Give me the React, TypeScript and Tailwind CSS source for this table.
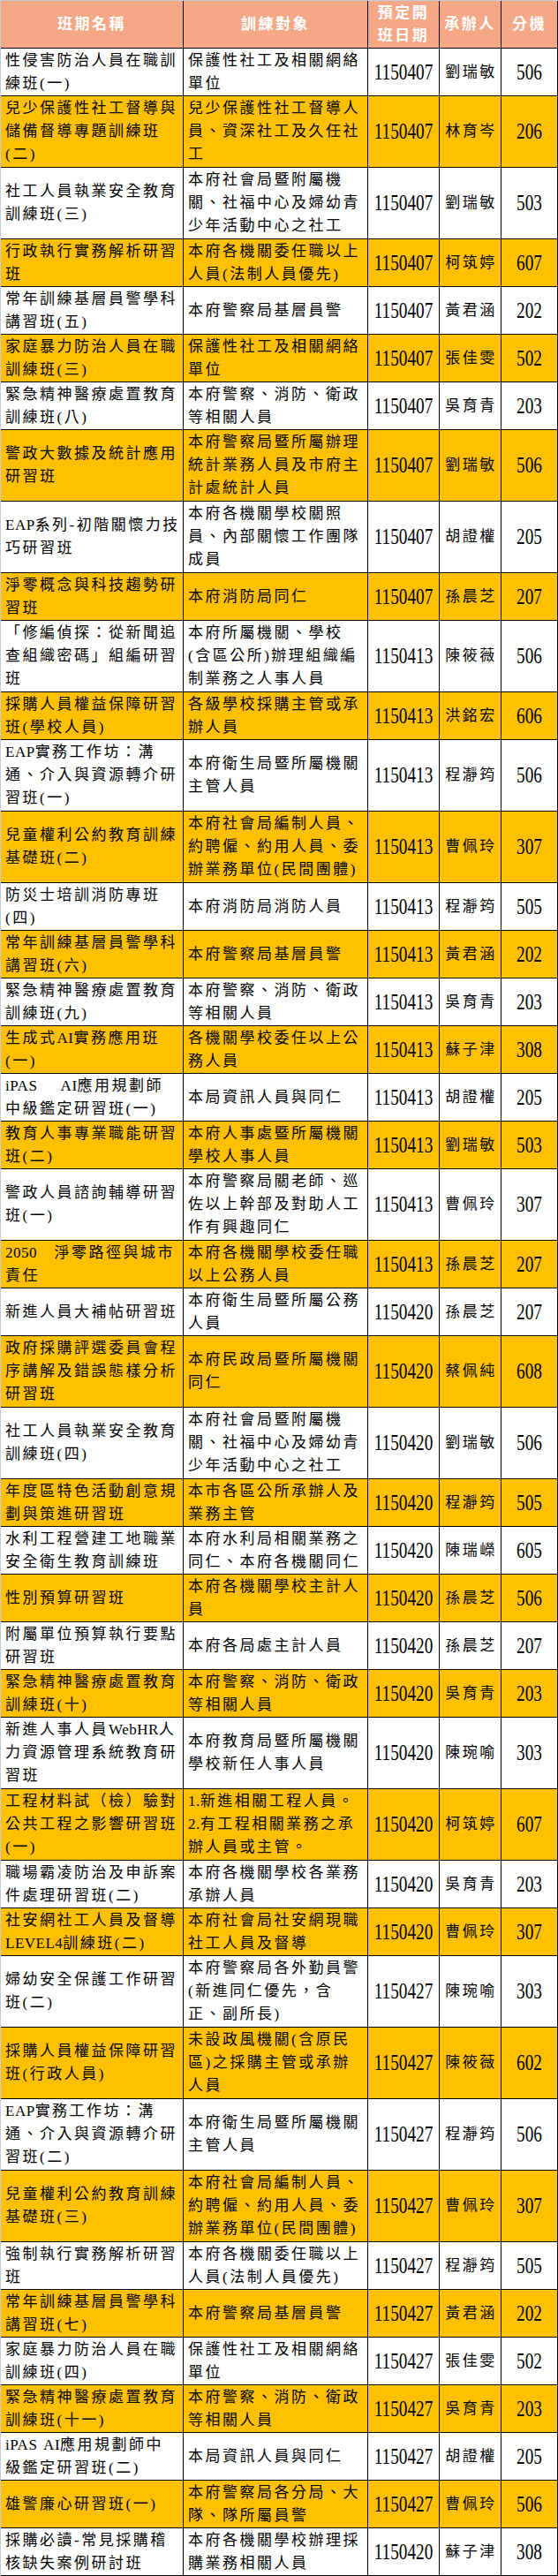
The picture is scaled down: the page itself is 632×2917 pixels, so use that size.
const rows: [string, string, string, string, string][] = [
  ["性侵害防治人員在職訓|練班(一)", "保護性社工及相關網絡|單位", "1150407", "劉瑞敏", "506"],
  ["兒少保護性社工督導與|儲備督導專題訓練班|(二)", "兒少保護性社工督導人|員、資深社工及久任社|工", "1150407", "林育岑", "206"],
  ["社工人員執業安全教育|訓練班(三)", "本府社會局暨附屬機|關、社福中心及婦幼青|少年活動中心之社工", "1150407", "劉瑞敏", "503"],
  ["行政執行實務解析研習|班", "本府各機關委任職以上|人員(法制人員優先)", "1150407", "柯筑婷", "607"],
  ["常年訓練基層員警學科|講習班(五)", "本府警察局基層員警", "1150407", "黃君涵", "202"],
  ["家庭暴力防治人員在職|訓練班(三)", "保護性社工及相關網絡|單位", "1150407", "張佳雯", "502"],
  ["緊急精神醫療處置教育|訓練班(八)", "本府警察、消防、衛政|等相關人員", "1150407", "吳育青", "203"],
  ["警政大數據及統計應用|研習班", "本府警察局暨所屬辦理|統計業務人員及市府主|計處統計人員", "1150407", "劉瑞敏", "506"],
  ["EAP系列-初階關懷力技|巧研習班", "本府各機關學校關照|員、內部關懷工作團隊|成員", "1150407", "胡證權", "205"],
  ["淨零概念與科技趨勢研|習班", "本府消防局同仁", "1150407", "孫晨芝", "207"],
  ["「修編偵探：從新聞追|查組織密碼」組編研習|班", "本府所屬機關、學校|(含區公所)辦理組織編|制業務之人事人員", "1150413", "陳筱薇", "506"],
  ["採購人員權益保障研習|班(學校人員)", "各級學校採購主管或承|辦人員", "1150413", "洪銘宏", "606"],
  ["EAP實務工作坊：溝|通、介入與資源轉介研|習班(一)", "本府衛生局暨所屬機關|主管人員", "1150413", "程瀞筠", "506"],
  ["兒童權利公約教育訓練|基礎班(二)", "本府社會局編制人員、|約聘僱、約用人員、委|辦業務單位(民間團體)", "1150413", "曹佩玲", "307"],
  ["防災士培訓消防專班|(四)", "本府消防局消防人員", "1150413", "程瀞筠", "505"],
  ["常年訓練基層員警學科|講習班(六)", "本府警察局基層員警", "1150413", "黃君涵", "202"],
  ["緊急精神醫療處置教育|訓練班(九)", "本府警察、消防、衛政|等相關人員", "1150413", "吳育青", "203"],
  ["生成式AI實務應用班|(一)", "各機關學校委任以上公|務人員", "1150413", "蘇子津", "308"],
  ["iPAS　 AI應用規劃師|中級鑑定研習班(一)", "本局資訊人員與同仁", "1150413", "胡證權", "205"],
  ["教育人事專業職能研習|班(二)", "本府人事處暨所屬機關|學校人事人員", "1150413", "劉瑞敏", "503"],
  ["警政人員諮詢輔導研習|班(一)", "本府警察局關老師、巡|佐以上幹部及對助人工|作有興趣同仁", "1150413", "曹佩玲", "307"],
  ["2050　淨零路徑與城市|責任", "本府各機關學校委任職|以上公務人員", "1150413", "孫晨芝", "207"],
  ["新進人員大補帖研習班", "本府衛生局暨所屬公務|人員", "1150420", "孫晨芝", "207"],
  ["政府採購評選委員會程|序講解及錯誤態樣分析|研習班", "本府民政局暨所屬機關|同仁", "1150420", "蔡佩純", "608"],
  ["社工人員執業安全教育|訓練班(四)", "本府社會局暨附屬機|關、社福中心及婦幼青|少年活動中心之社工", "1150420", "劉瑞敏", "506"],
  ["年度區特色活動創意規|劃與策進研習班", "本市各區公所承辦人及|業務主管", "1150420", "程瀞筠", "505"],
  ["水利工程營建工地職業|安全衛生教育訓練班", "本府水利局相關業務之|同仁、本府各機關同仁", "1150420", "陳瑞嶸", "605"],
  ["性別預算研習班", "本府各機關學校主計人|員", "1150420", "孫晨芝", "506"],
  ["附屬單位預算執行要點|研習班", "本府各局處主計人員", "1150420", "孫晨芝", "207"],
  ["緊急精神醫療處置教育|訓練班(十)", "本府警察、消防、衛政|等相關人員", "1150420", "吳育青", "203"],
  ["新進人事人員WebHR人|力資源管理系統教育研|習班", "本府教育局暨所屬機關|學校新任人事人員", "1150420", "陳琬喻", "303"],
  ["工程材料試（檢）驗對|公共工程之影響研習班|(一)", "1.新進相關工程人員。|2.有工程相關業務之承|辦人員或主管。", "1150420", "柯筑婷", "607"],
  ["職場霸凌防治及申訴案|件處理研習班(二)", "本府各機關學校各業務|承辦人員", "1150420", "吳育青", "203"],
  ["社安網社工人員及督導|LEVEL4訓練班(二)", "本府社會局社安網現職|社工人員及督導", "1150420", "曹佩玲", "307"],
  ["婦幼安全保護工作研習|班(二)", "本府警察局各外勤員警|(新進同仁優先，含|正、副所長)", "1150427", "陳琬喻", "303"],
  ["採購人員權益保障研習|班(行政人員)", "未設政風機關(含原民|區)之採購主管或承辦|人員", "1150427", "陳筱薇", "602"],
  ["EAP實務工作坊：溝|通、介入與資源轉介研|習班(二)", "本府衛生局暨所屬機關|主管人員", "1150427", "程瀞筠", "506"],
  ["兒童權利公約教育訓練|基礎班(三)", "本府社會局編制人員、|約聘僱、約用人員、委|辦業務單位(民間團體)", "1150427", "曹佩玲", "307"],
  ["強制執行實務解析研習|班", "本府各機關委任職以上|人員(法制人員優先)", "1150427", "程瀞筠", "505"],
  ["常年訓練基層員警學科|講習班(七)", "本府警察局基層員警", "1150427", "黃君涵", "202"],
  ["家庭暴力防治人員在職|訓練班(四)", "保護性社工及相關網絡|單位", "1150427", "張佳雯", "502"],
  ["緊急精神醫療處置教育|訓練班(十一)", "本府警察、消防、衛政|等相關人員", "1150427", "吳育青", "203"],
  ["iPAS AI應用規劃師中|級鑑定研習班(二)", "本局資訊人員與同仁", "1150427", "胡證權", "205"],
  ["雄警廉心研習班(一)", "本府警察局各分局、大|隊、隊所屬員警", "1150427", "曹佩玲", "506"],
  ["採購必讀-常見採購稽|核缺失案例研討班", "本府各機關學校辦理採|購業務相關人員", "1150420", "蘇子津", "308"],
];

const grid = "grid grid-cols-[207px_209px_81px_70px_64px]";

// latin runs get tighter tracking than the CJK text
const Line = ({ s }: { s: string }) => (
  <div className="whitespace-pre">
    {s.split(/([A-Za-z0-9.]+)/).map((p, i) =>
      /^[A-Za-z0-9.]+$/.test(p) ? (
        <span key={i} className="tracking-[0.5px]">{p}</span>
      ) : (
        <span key={i}>{p}</span>
      )
    )}
  </div>
);

const Num = ({ v }: { v: string }) => (
  <span className="inline-block text-[26px] leading-none tracking-normal scale-x-[0.74]">{v}</span>
);

export default function App() {
  return (
    <div className="w-[632px] bg-white border-t border-l border-[#c4ccd8] font-['Liberation_Serif','Noto_Sans_CJK_TC',serif] text-[17px] tracking-[2.5px] leading-[26px] text-black">
      {/* header */}
      <div className={`${grid} h-[54px] bg-[#f4a886] border-b border-black text-white font-bold`}>
        <div className="flex items-center justify-center border-r border-black">班期名稱</div>
        <div className="flex items-center justify-center border-r border-black">訓練對象</div>
        <div className="flex flex-col items-center justify-center border-r border-black">
          <div>預定開</div>
          <div>班日期</div>
        </div>
        <div className="flex items-center justify-center border-r border-black">承辦人</div>
        <div className="flex items-center justify-center border-r border-black">分機</div>
      </div>

      {rows.map(([name, target, date, owner, ext], i) => {
        const a = name.split("|");
        const b = target.split("|");
        const tall = Math.max(a.length, b.length) > 2;
        return (
          <div
            key={i}
            className={`${grid} border-b border-black ${tall ? "h-[81px]" : "h-[54px]"} ${
              i % 2 ? "bg-[#ffc000]" : "bg-white"
            }`}
          >
            <div className="flex flex-col justify-center pl-[5px] border-r border-black overflow-visible">
              {a.map((l, j) => (
                <Line key={j} s={l} />
              ))}
            </div>
            <div className="flex flex-col justify-center pl-[5px] border-r border-black">
              {b.map((l, j) => (
                <Line key={j} s={l} />
              ))}
            </div>
            <div className="flex items-center justify-center border-r border-black">
              <Num v={date} />
            </div>
            <div className="flex items-center justify-center pl-[2px] border-r border-black whitespace-nowrap">
              {owner}
            </div>
            <div className="flex items-center justify-center border-r border-black">
              <Num v={ext} />
            </div>
          </div>
        );
      })}
    </div>
  );
}
